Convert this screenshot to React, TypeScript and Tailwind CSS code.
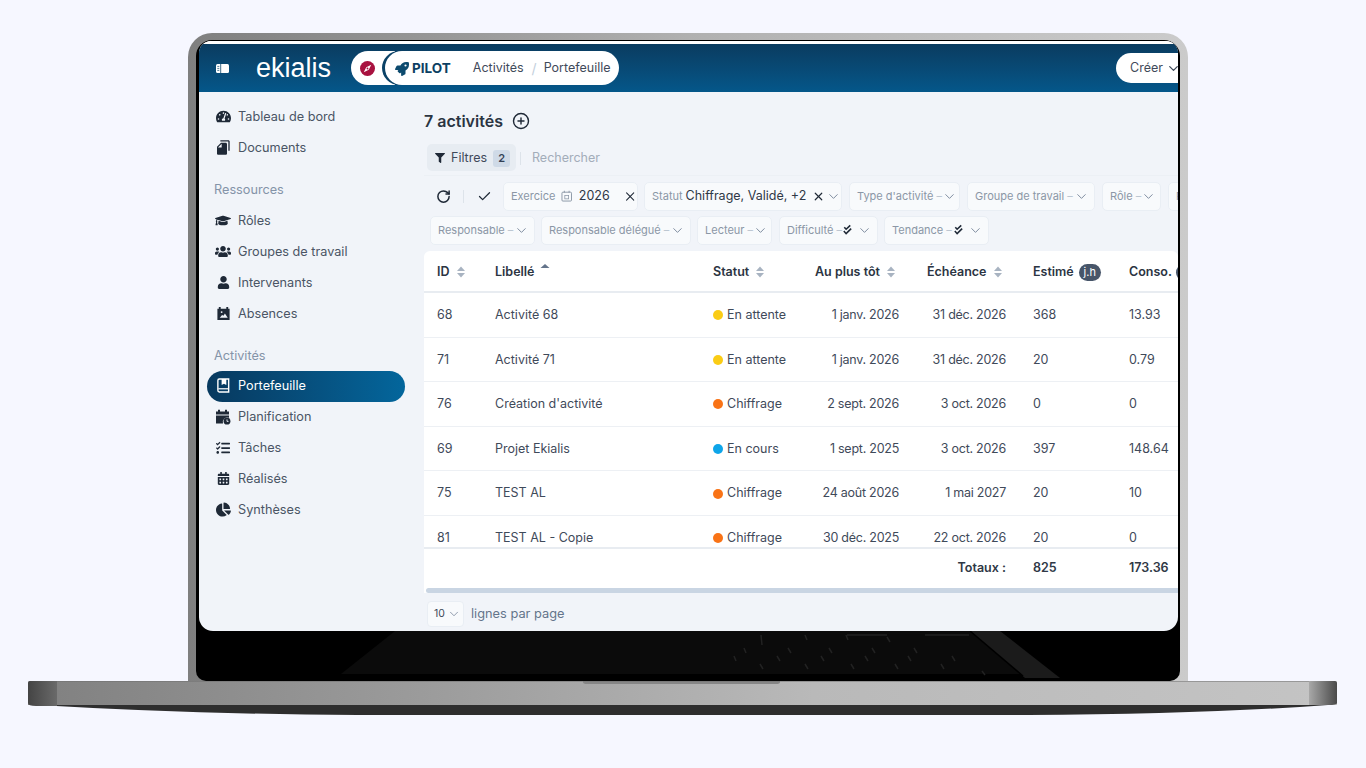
import React from "react";
import { ChevronDown, X, Check, RotateCw, CirclePlus } from "lucide-react";
import { FaTachometerAlt, FaGraduationCap, FaUsers, FaUser, FaTasks, FaCalendarAlt, FaChartPie, FaRocket, FaFilter } from "react-icons/fa";
import { MdFileCopy } from "react-icons/md";

const IconAbsences = () => (
  <svg viewBox="0 0 16 16" className="w-[15px] h-[15px]">
    <path d="M3 1h2v2h6V1h2v2h1.5v12h-13V3H3z" fill="#1f2937" />
    <path d="M4 12.5l2.5-3 1.5 1 1.5-2.5 3 4.5z" fill="#f1f4f9" />
    <circle cx="6" cy="6.5" r="1" fill="#f1f4f9" />
  </svg>
);
const IconBook = () => (
  <svg viewBox="0 0 16 16" className="w-[15px] h-[15px]">
    <path d="M3.5 1h10v14h-10A1.8 1.8 0 0 1 2 13V2.6A1.6 1.6 0 0 1 3.5 1z" fill="none" stroke="#fff" strokeWidth="1.5" />
    <path d="M6 1h5v6.5L8.5 6 6 7.5z" fill="#fff" />
    <path d="M2.5 11.5h11" stroke="#fff" strokeWidth="1.3" />
  </svg>
);
const IconPlan = () => (
  <svg viewBox="0 0 16 16" className="w-[16px] h-[16px]">
    <path d="M3 0.8h2v1.7h5V0.8h2v1.7h2v3H1v-3h2zM1 6.5h13v2.3A4.6 4.6 0 0 0 8 14.5H1z" fill="#1f2937" />
    <circle cx="12" cy="12.2" r="3.4" fill="#1f2937" />
    <path d="M12 10.4v2h1.5" stroke="#f1f4f9" strokeWidth="0.9" fill="none" />
  </svg>
);
const IconDoubleCheck = () => (
  <svg viewBox="0 0 12 12" className="w-[11px] h-[12px] shrink-0">
    <path d="M2.5 3l2 2.2L9 1M2 7l2.5 3L10 4.5" fill="none" stroke="#1f2937" strokeWidth="1.7" />
  </svg>
);
const Sort = ({ active }: { active?: boolean }) => (
  <svg viewBox="0 0 9 12" className="w-[10px] h-[12px] shrink-0">
    {active ? (
      <path d="M4.5 1L9 5H0z" fill="#64748b" />
    ) : (
      <>
        <path d="M4.5 0.5L8.5 5H0.5z" fill="#a8b3c1" />
        <path d="M4.5 11.5L8.5 7H0.5z" fill="#a8b3c1" />
      </>
    )}
  </svg>
);

const NavRow = ({ icon, label, active, up }: { icon: React.ReactNode; label: string; active?: boolean; up?: boolean }) => (
  <div
    className={
      "h-[31px] w-[198px] rounded-full flex items-center pl-[8px] text-[12.7px] " +
      (up ? "pb-[2px] " : "") +
      (active ? "bg-gradient-to-r from-[#07395f] to-[#03669c] text-white" : "text-[#4a5565]")
    }
  >
    <span className={"w-[16px] flex justify-center shrink-0 " + (active ? "text-white" : "text-[#1f2937]")}>{icon}</span>
    <span className="ml-[7px]">{label}</span>
  </div>
);
const NavLabel = ({ children, className }: { children: string; className: string }) => (
  <div className={"h-[31px] flex items-center pl-[7px] text-[12.7px] text-[#8493a8] " + className}>{children}</div>
);

const Chip = ({ w, label, children }: { w: string; label: string; children?: React.ReactNode }) => (
  <div className={"h-[29px] shrink-0 flex items-center justify-between pl-[7px] pr-[5px] rounded-[5px] bg-[#f8fafc] border border-[#e9eef4] text-[11px] text-[#8b97a6] " + w}>
    <span className="whitespace-nowrap">
      {label} <span className="text-[#bcc6d1]">–</span>
    </span>
    <span className="flex items-center gap-[4px]">
      {children}
      <ChevronDown size={15} strokeWidth={1.3} className="text-[#64748b]" />
    </span>
  </div>
);

const rows = [
  ["68", "Activité 68", "#facc15", "En attente", "1 janv. 2026", "31 déc. 2026", "368", "13.93"],
  ["71", "Activité 71", "#facc15", "En attente", "1 janv. 2026", "31 déc. 2026", "20", "0.79"],
  ["76", "Création d'activité", "#f97316", "Chiffrage", "2 sept. 2026", "3 oct. 2026", "0", "0"],
  ["69", "Projet Ekialis", "#0ea5e9", "En cours", "1 sept. 2025", "3 oct. 2026", "397", "148.64"],
  ["75", "TEST AL", "#f97316", "Chiffrage", "24 août 2026", "1 mai 2027", "20", "10"],
  ["81", "TEST AL - Copie", "#f97316", "Chiffrage", "30 déc. 2025", "22 oct. 2026", "20", "0"],
];
const cols = "grid grid-cols-[58px_218px_102px_112px_106px_96px_100px] w-[792px]";

const Head = ({ children, active }: { children: string; active?: boolean }) => (
  <div className="pl-[13px] flex items-center gap-[6px] whitespace-nowrap">
    <span>{children}</span>
    <Sort active={active} />
  </div>
);

export default function App() {
  return (
    <div className="w-[1366px] h-[768px] bg-[#f6f7ff] overflow-hidden pt-[33px] font-['Inter',sans-serif]">
      {/* lid */}
      <div className="ml-[188px] w-[1000px] h-[648px] rounded-t-[24px] pt-[7px] pl-[8px] pr-[8px] bg-gradient-to-r from-[#7f7f7f] via-[#b0b0b0] to-[#cbcbcb]">
        <div className="h-[641px] rounded-t-[16px] rounded-b-[10px] bg-black pt-[1px] pl-[3px] pr-[2px] overflow-hidden">
          <div className="w-[979px] h-[590px] rounded-t-[12px] rounded-b-[14px] overflow-hidden bg-[#f1f4f9] flex flex-col">
            <div className="h-[3px] bg-white shrink-0" />
            {/* header */}
            <div className="h-[48px] shrink-0 bg-gradient-to-b from-[#0a3c60] to-[#04578a] flex items-center relative">
              <svg viewBox="0 0 13 9" className="ml-[17px] w-[13px] h-[9px] shrink-0">
                <rect width="13" height="9" rx="1.5" fill="#fff" />
                <path d="M4.7 0v9" stroke="#0a4468" strokeWidth="0.8" />
                <path d="M1.3 2.4h2M1.3 4.4h2M1.3 6.4h2" stroke="#0a4468" strokeWidth="0.7" />
              </svg>
              <div className="ml-[27px] mt-[1px] w-[95px] text-[27px] leading-none text-white font-['Liberation_Sans',sans-serif]">ekialis</div>
              <div className="w-[44px] h-[34px] rounded-l-full bg-white flex items-center pl-[9px]">
                <svg viewBox="0 0 16 16" className="w-[15px] h-[15px]">
                  <circle cx="8" cy="8" r="8" fill="#a8123f" />
                  <path d="M12 4L9.3 9.3 4 12l2.7-5.3z" fill="#fff" />
                  <circle cx="8" cy="8" r="1" fill="#a8123f" />
                </svg>
              </div>
              <div className="-ml-[10px] w-[234px] h-[34px] rounded-full bg-white shadow-[-3px_0_0_#0a4166] flex items-center pl-[10px] pt-[1px] relative">
                <FaRocket size={14} className="text-[#0c4a6e]" />
                <span className="ml-[3px] text-[13.5px] font-bold text-[#0c3f63]">PILOT</span>
                <span className="ml-[22px] text-[12.5px] text-[#3f4a5a]">Activités</span>
                <span className="ml-[8px] text-[14px] text-[#c3cfdc]">/</span>
                <span className="ml-[7px] text-[12.5px] text-[#3f4a5a]">Portefeuille</span>
              </div>
              <div className="absolute right-0 top-[9px] w-[62px] h-[30px] rounded-l-full bg-white flex items-center pl-[14px] pt-[1px] text-[12.5px] text-[#3f4a5a]">
                Créer
                <ChevronDown size={15} strokeWidth={2} className="ml-[3px] shrink-0 text-[#3f4a5a]" />
              </div>
            </div>
            {/* body */}
            <div className="flex-1 flex min-h-0">
              <div className="w-[225px] shrink-0 pt-[9px] pl-[8px]">
                <NavRow icon={<FaTachometerAlt size={15} />} label="Tableau de bord" />
                <NavRow icon={<MdFileCopy size={17} className="-scale-x-100" />} label="Documents" />
                <NavLabel className="mt-[11px]">Ressources</NavLabel>
                <NavRow icon={<FaGraduationCap size={17} />} label="Rôles" />
                <NavRow icon={<FaUsers size={17} />} label="Groupes de travail" />
                <NavRow icon={<FaUser size={13} />} label="Intervenants" />
                <NavRow icon={<IconAbsences />} label="Absences" />
                <NavLabel className="mt-[11px]">Activités</NavLabel>
                <NavRow up active icon={<IconBook />} label="Portefeuille" />
                <NavRow up icon={<IconPlan />} label="Planification" />
                <NavRow up icon={<FaTasks size={14} />} label="Tâches" />
                <NavRow up icon={<FaCalendarAlt size={13} />} label="Réalisés" />
                <NavRow up icon={<FaChartPie size={15} />} label="Synthèses" />
              </div>
              <div className="flex-1 min-w-0 overflow-hidden pt-[16px]">
                <div className="h-[26px] flex items-center text-[16px] font-semibold text-[#2b3442]">
                  <span>7 activités</span>
                  <CirclePlus size={18} strokeWidth={1.9} className="ml-[9px] text-[#1f2937]" />
                </div>
                <div className="mt-[10px] h-[27px] flex items-center ml-[3px] pt-[1px]">
                  <div className="w-[89px] h-[27px] -mt-[1px] rounded-[5px] bg-[#e7ecf2] flex items-center pl-[8px] pt-[1px] text-[12.5px] text-[#3f4a5a]">
                    <FaFilter size={10} className="text-[#1f2937]" />
                    <span className="ml-[6px]">Filtres</span>
                    <span className="ml-[6px] w-[17px] h-[17px] rounded-[3px] bg-[#cfdae7] flex items-center justify-center text-[11px] font-semibold text-[#334155]">2</span>
                  </div>
                  <div className="ml-[4px] w-px h-[13px] bg-[#dde3ea]" />
                  <span className="ml-[11px] text-[12.5px] text-[#a3adba]">Rechercher</span>
                </div>
                <div className="mt-[4px] h-px bg-[#ecf0f5]" />
                {/* filters row 1 */}
                <div className="mt-[5px] h-[30px] flex items-center pl-[12px] w-[900px]">
                  <RotateCw size={15} strokeWidth={2.4} className="shrink-0 text-[#1f2937]" />
                  <div className="ml-[12px] w-px h-[13px] bg-[#dde3ea] shrink-0" />
                  <Check size={15} strokeWidth={2} className="ml-[13px] shrink-0 text-[#1f2937]" />
                  <div className="ml-[11px] w-[135px] h-[29px] shrink-0 flex items-center pl-[7px] rounded-[5px] bg-[#f8fafc] border border-[#e9eef4] text-[11px] text-[#8b97a6]">
                    <span>Exercice</span>
                    <svg viewBox="0 0 12 12" className="ml-[6px] w-[12px] h-[12px]">
                      <rect x="1" y="2" width="10" height="9.3" rx="1" fill="none" stroke="#8b97a6" />
                      <path d="M3.5 0.5v2M8.5 0.5v2" stroke="#8b97a6" />
                      <rect x="4" y="5.5" width="4" height="3.5" fill="none" stroke="#8b97a6" strokeWidth="0.8" />
                    </svg>
                    <span className="ml-[6px] text-[12.5px] text-[#2f3846]">2026</span>
                    <X size={15} strokeWidth={1.8} className="ml-[13px] text-[#1f2937]" />
                  </div>
                  <div className="ml-[6px] w-[198px] h-[29px] shrink-0 flex items-center pl-[7px] rounded-[5px] bg-[#f8fafc] border border-[#e9eef4] text-[11px] text-[#8b97a6]">
                    <span>Statut</span>
                    <span className="ml-[3px] text-[12.5px] text-[#2f3846] whitespace-nowrap w-[126px]">Chiffrage, Validé, +2</span>
                    <X size={13} strokeWidth={2.2} className="shrink-0 text-[#1f2937]" />
                    <ChevronDown size={15} strokeWidth={1.3} className="ml-[1px] shrink-0 text-[#64748b]" />
                  </div>
                  <div className="ml-[7px] flex gap-[7px]">
                    <Chip w="w-[111px]" label="Type d'activité" />
                    <Chip w="w-[128px]" label="Groupe de travail" />
                    <Chip w="w-[59px]" label="Rôle" />
                    <Chip w="w-[80px]" label="Priorité" />
                  </div>
                </div>
                {/* filters row 2 */}
                <div className="mt-[4px] h-[30px] flex items-center gap-[6px] pl-[6px]">
                  <Chip w="w-[105px]" label="Responsable" />
                  <Chip w="w-[150px]" label="Responsable délégué" />
                  <Chip w="w-[75px]" label="Lecteur" />
                  <Chip w="w-[99px] ml-[1px]" label="Difficulté"><IconDoubleCheck /></Chip>
                  <Chip w="w-[105px]" label="Tendance"><IconDoubleCheck /></Chip>
                </div>
                {/* table */}
                <div className="mt-[6px] bg-white rounded-t-[6px] overflow-hidden text-[12.5px] text-[#3f4a5a]">
                  <div className={cols + " h-[40px] pt-[2px] items-center font-semibold text-[#2b3442]"}>
                    <Head>ID</Head>
                    <div className="pl-[13px] flex items-start gap-[6px]">
                      <span>Libellé</span>
                      <Sort active />
                    </div>
                    <Head>Statut</Head>
                    <Head>Au plus tôt</Head>
                    <Head>Échéance</Head>
                    <div className="pl-[13px] flex items-center gap-[5px]">
                      <span>Estimé</span>
                      <span className="w-[22px] h-[17px] rounded-full bg-[#475569] text-white text-[11px] font-normal flex items-center justify-center">j.h</span>
                    </div>
                    <div className="pl-[13px] flex items-center gap-[4px]">
                      <span>Conso.</span>
                      <span className="w-[22px] h-[17px] rounded-full bg-[#475569] text-white text-[11px] font-normal flex items-center justify-center">j.h</span>
                    </div>
                  </div>
                  <div className="h-[2px] bg-[#e8ecf1]" />
                  <div className="h-[254px] overflow-hidden">
                    {rows.map((r) => (
                      <div key={r[0]} className="h-[44.6px] border-b border-[#edf0f4]">
                        <div className={cols + " h-full pt-[1px] items-center"}>
                          <div className="pl-[13px]">{r[0]}</div>
                          <div className="pl-[13px] whitespace-nowrap">{r[1]}</div>
                          <div className="pl-[13px] flex items-center gap-[4px] whitespace-nowrap">
                            <span className="w-[10px] h-[10px] rounded-full" style={{ backgroundColor: r[2] }} />
                            <span>{r[3]}</span>
                          </div>
                          <div className="pr-[15px] text-right whitespace-nowrap tracking-[-0.25px]">{r[4]}</div>
                          <div className="pr-[14px] text-right whitespace-nowrap tracking-[-0.25px]">{r[5]}</div>
                          <div className="pl-[13px]">{r[6]}</div>
                          <div className="pl-[13px]">{r[7]}</div>
                        </div>
                      </div>
                    ))}
                  </div>
                  <div className="h-[2px] bg-[#e8ecf1]" />
                  <div className={cols + " h-[39px] items-center font-semibold text-[#2f3846]"}>
                    <div className="col-span-5 pr-[14px] text-right">Totaux :</div>
                    <div className="pl-[13px]">825</div>
                    <div className="pl-[13px]">173.36</div>
                  </div>
                  <div className="h-[5px] ml-[2px] rounded-l-full bg-[#c9d5e3]" />
                </div>
                {/* pager */}
                <div className="mt-[8px] h-[26px] flex items-center ml-[3px]">
                  <div className="w-[37px] h-[26px] rounded-[4px] bg-[#f8fafc] border border-[#e9eef4] flex items-center pl-[6px] text-[10.5px] text-[#3f4a5a]">
                    10
                    <ChevronDown size={14} strokeWidth={1.2} className="ml-[2px] text-[#64748b]" />
                  </div>
                  <span className="ml-[7px] text-[12.8px] text-[#64748b]">lignes par page</span>
                </div>
              </div>
            </div>
          </div>
          {/* keyboard reflection */}
          <svg viewBox="0 0 979 50" className="w-[979px] h-[50px] block">
            <path d="M142 43L196 0H771L822 43z" fill="#0b0b0b" />
            <path d="M771 0H801L861 47H826z" fill="#1b1b1b" />
            <path d="M771 0L824 45" stroke="#000" strokeWidth="1.5" />
            <path
              d="M562 4l1 10M606 4l2 5M647 4l2 5M688 6l3 5M545 17l2 5M589 17l3 5M630 17l3 5M673 17l3 5M715 17l3 5M535 25l2 5M578 25l3 5M622 25l3 5M666 25l3 5M709 25l3 5M753 25l3 5M561 33l3 5M606 33l3 5M652 33l3 5M696 33l3 5M742 33l3 5M783 40l3 4M648 4h40M726 4h44"
              stroke="#222"
              strokeWidth="1.5"
              fill="none"
            />
          </svg>
        </div>
      </div>
      {/* base */}
      <svg viewBox="0 0 1309 34" className="ml-[28px] w-[1309px] h-[34px] block">
        <defs>
          <linearGradient id="b" x1="0" x2="1" y1="0" y2="0">
            <stop offset="0" stopColor="#808080" />
            <stop offset="0.3" stopColor="#9b9b9b" />
            <stop offset="0.6" stopColor="#b9b9b9" />
            <stop offset="1" stopColor="#c4c4c4" />
          </linearGradient>
          <linearGradient id="c" x1="0" x2="1" y1="0" y2="0">
            <stop offset="0" stopColor="#444" />
            <stop offset="1" stopColor="#6a6a6a" />
          </linearGradient>
          <linearGradient id="d" x1="0" x2="1" y1="0" y2="0">
            <stop offset="0" stopColor="#a8a8a8" />
            <stop offset="1" stopColor="#4a4a4a" />
          </linearGradient>
        </defs>
        <path d="M10 24 Q160 33 330 34 H1000 Q1180 33 1300 24z" fill="#2e2e2e" />
        <path d="M2 0H1307Q1309 0 1309 2V24H0V2Q0 0 2 0z" fill="url(#b)" />
        <path d="M2 0H29V25H8Q0 25 0 22V2Q0 0 2 0z" fill="url(#c)" />
        <path d="M1281 0H1307Q1309 0 1309 2V22Q1309 24 1300 24H1281z" fill="url(#d)" />
        <path d="M555 0H752V1Q752 3 748 3H559Q555 3 555 1z" fill="#868686" />
        <path d="M29 0H1281" stroke="#6e6e6e" strokeWidth="1" />
      </svg>
    </div>
  );
}
